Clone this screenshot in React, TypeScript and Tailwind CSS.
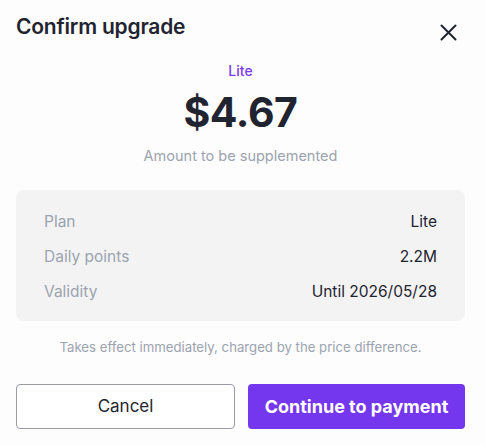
const rows = [
  { label: "Plan", value: "Lite" },
  { label: "Daily points", value: "2.2M" },
  { label: "Validity", value: "Until 2026/05/28" },
];

export default function App() {
  return (
    <div className="h-[445px] w-[485px] bg-[#fdfdfe] pl-4 pr-5 pt-[13px] font-['Inter',sans-serif] text-[#1f2430]">
      <div className="flex items-start justify-between">
        <h2 className="text-[21px] font-semibold leading-7 tracking-[-0.01em]">Confirm upgrade</h2>
        <button className="mr-[8px] mt-[11px] text-[#1f2430]" aria-label="Close">
          <svg width="17" height="17" viewBox="0 0 17 17" fill="none" stroke="currentColor" strokeWidth="2" strokeLinecap="round">
            <path d="M1.5 1.5L15.5 15.5M15.5 1.5L1.5 15.5" />
          </svg>
        </button>
      </div>

      <div className="mt-[20px] flex flex-col items-center">
        <p className="text-[14px] font-medium leading-5 text-[#7c3aed]">Lite</p>
        <p className="mt-[7px] text-[41px] font-bold leading-[48px] tracking-[-0.01em] text-[#1f2430]">$4.67</p>
        <p className="mt-[10px] text-[14.5px] leading-5 text-[#9ca3af]">Amount to be supplemented</p>
      </div>

      <div className="mt-[24px] flex flex-col gap-[14px] rounded-lg bg-[#f3f3f4] px-7 pb-[19px] pt-[21px]">
        {rows.map((row) => (
          <div key={row.label} className="flex items-center justify-between text-[15.5px] leading-[21px]">
            <span className="text-[#9ca3af]">{row.label}</span>
            <span className="text-[#1f2430]">{row.value}</span>
          </div>
        ))}
      </div>

      <p className="mt-[16px] text-center text-[13.2px] leading-5 text-[#9ca3af]">
        Takes effect immediately, charged by the price difference.
      </p>

      <div className="mt-[27px] flex gap-[13px]">
        <button className="h-[45px] flex-1 rounded-[4px] border border-[#9a9ca3] bg-white text-[17px] text-[#1f2430]">
          Cancel
        </button>
        <button className="h-[45px] flex-1 rounded-[4px] bg-[#7537ee] text-[18px] font-bold text-white">
          Continue to payment
        </button>
      </div>
    </div>
  );
}
